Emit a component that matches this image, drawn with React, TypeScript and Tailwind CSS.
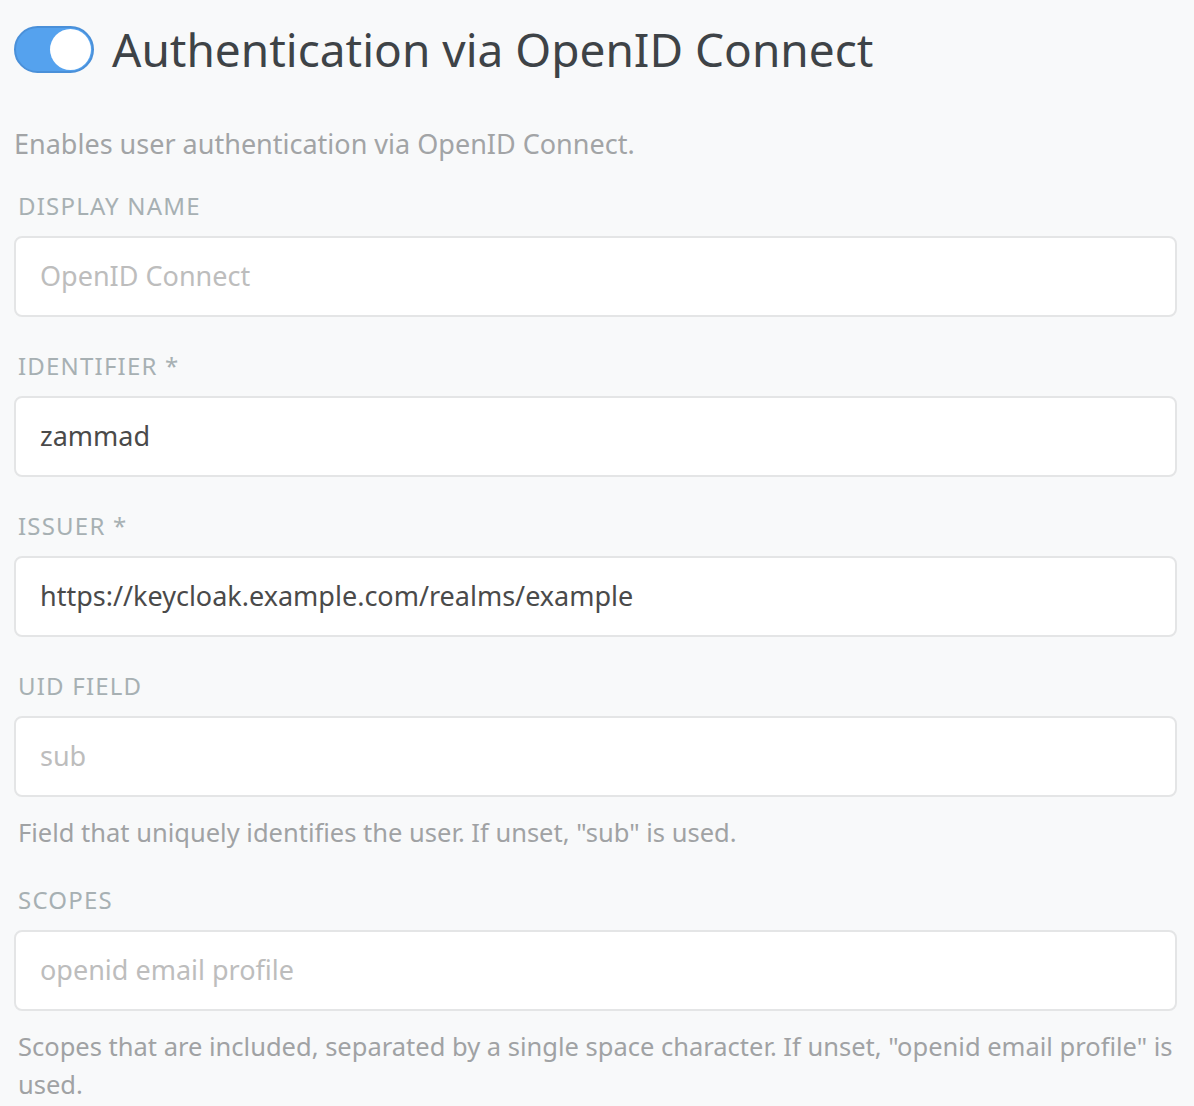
import React from "react";

const font = { fontFamily: '"Noto Sans", "Open Sans", sans-serif' };

function Field({ label, value, placeholder, help }: { label: string; value?: string; placeholder?: string; help?: string }) {
  return (
    <div className="flex flex-col">
      <div className="mb-[15px] pl-[4px] text-[24px] leading-[30px] tracking-[1.2px] text-[#a7b0b3]">{label}</div>
      <div className="flex h-[81px] items-center rounded-[8px] border-2 border-[#e4e5e6] bg-white px-[24px]">
        {value ? (
          <span className="text-[27px] text-[#4a4a4a]">{value}</span>
        ) : (
          <span className="text-[27px] text-[#bdbdbd]">{placeholder}</span>
        )}
      </div>
      {help ? (
        <div className="pl-[4px] pt-[16px] text-[25.5px] leading-[38px] text-[#a0a2a4]">{help}</div>
      ) : null}
    </div>
  );
}

export default function App() {
  return (
    <div className="min-h-[1106px] w-[1194px] bg-[#f8f9fa] pl-[14px] pr-[17px]" style={font}>
      <div className="flex h-[100px] items-center pb-[2px]">
        <div className="relative h-[47px] w-[80px] rounded-full border-2 border-[#4a90d9] bg-[#55a2ee]">
          <div className="absolute right-[1px] top-[1px] h-[41px] w-[41px] rounded-full bg-white" />
        </div>
        <h1 className="ml-[18px] text-[46px] leading-none text-[#3e4347]">Authentication via OpenID Connect</h1>
      </div>
      <div className="pt-[26px] text-[27px] leading-[36px] text-[#a2a4a6]">Enables user authentication via OpenID Connect.</div>
      <div className="mt-[29px] flex flex-col gap-[34px]">
        <Field label="DISPLAY NAME" placeholder="OpenID Connect" />
        <Field label="IDENTIFIER *" value="zammad" />
        <Field label="ISSUER *" value="https://keycloak.example.com/realms/example" />
        <Field label="UID FIELD" placeholder="sub" help={'Field that uniquely identifies the user. If unset, "sub" is used.'} />
      </div>
      <div className="mt-[34px]">
        <Field label="SCOPES" placeholder="openid email profile" help={'Scopes that are included, separated by a single space character. If unset, "openid email profile" is used.'} />
      </div>
    </div>
  );
}
